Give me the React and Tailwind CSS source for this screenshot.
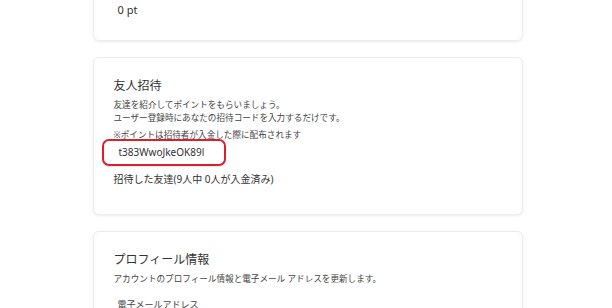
import React from "react";

const font = { fontFamily: '"Noto Sans", "Noto Sans CJK JP", sans-serif' };

const Card = ({ children, className = "" }) => (
  <div
    className={`w-[430px] bg-white border border-[#ececec] rounded-md shadow-[0_1px_3px_rgba(0,0,0,0.08)] ${className}`}
  >
    {children}
  </div>
);

export default function App() {
  return (
    <div
      style={font}
      className="w-[612px] h-[308px] overflow-hidden bg-white flex flex-col items-center"
    >
      <div className="w-full flex flex-col items-center gap-4 -mt-[40px] pl-[3px]">
        <Card className="h-[81px] px-6 flex items-end pb-[22px]">
          <p className="text-[11px] text-[#333] leading-[16px]">0 pt</p>
        </Card>

        <Card className="h-[158px] pl-[20px] pt-[20px]">
          <h2 className="text-[12px] text-[#333] leading-[16px]">友人招待</h2>
          <p className="mt-[5px] text-[8.6px] text-[#444] leading-[13px]">
            友達を紹介してポイントをもらいましょう。
            <br />
            ユーザー登録時にあなたの招待コードを入力するだけです。
          </p>
          <p className="mt-[4px] text-[8.6px] text-[#444] leading-[13px]">
            ※ポイントは招待者が入金した際に配布されます
          </p>
          <div className="-mt-[3px] -ml-[12px] w-[124px] h-[27px] border-2 border-[#d9212c] rounded-[7px] flex items-center pl-[15px] shadow-[0_1px_2px_rgba(0,0,0,0.1)]">
            <span className="text-[10px] text-[#333]">t383WwoJkeOK89l</span>
          </div>
          <p className="mt-[6px] text-[10px] text-[#333] leading-[14px]">
            招待した友達(9人中 0人が入金済み)
          </p>
        </Card>

        <Card className="h-[120px] pl-[20px] pt-[20px]">
          <h2 className="text-[12px] text-[#333] leading-[16px]">プロフィール情報</h2>
          <p className="mt-[5px] text-[8.6px] text-[#444] leading-[13px]">
            アカウントのプロフィール情報と電子メール アドレスを更新します。
          </p>
          <p className="mt-[12px] ml-[4px] text-[9px] text-[#444] leading-[13px]">
            電子メールアドレス
          </p>
        </Card>
      </div>
    </div>
  );
}
